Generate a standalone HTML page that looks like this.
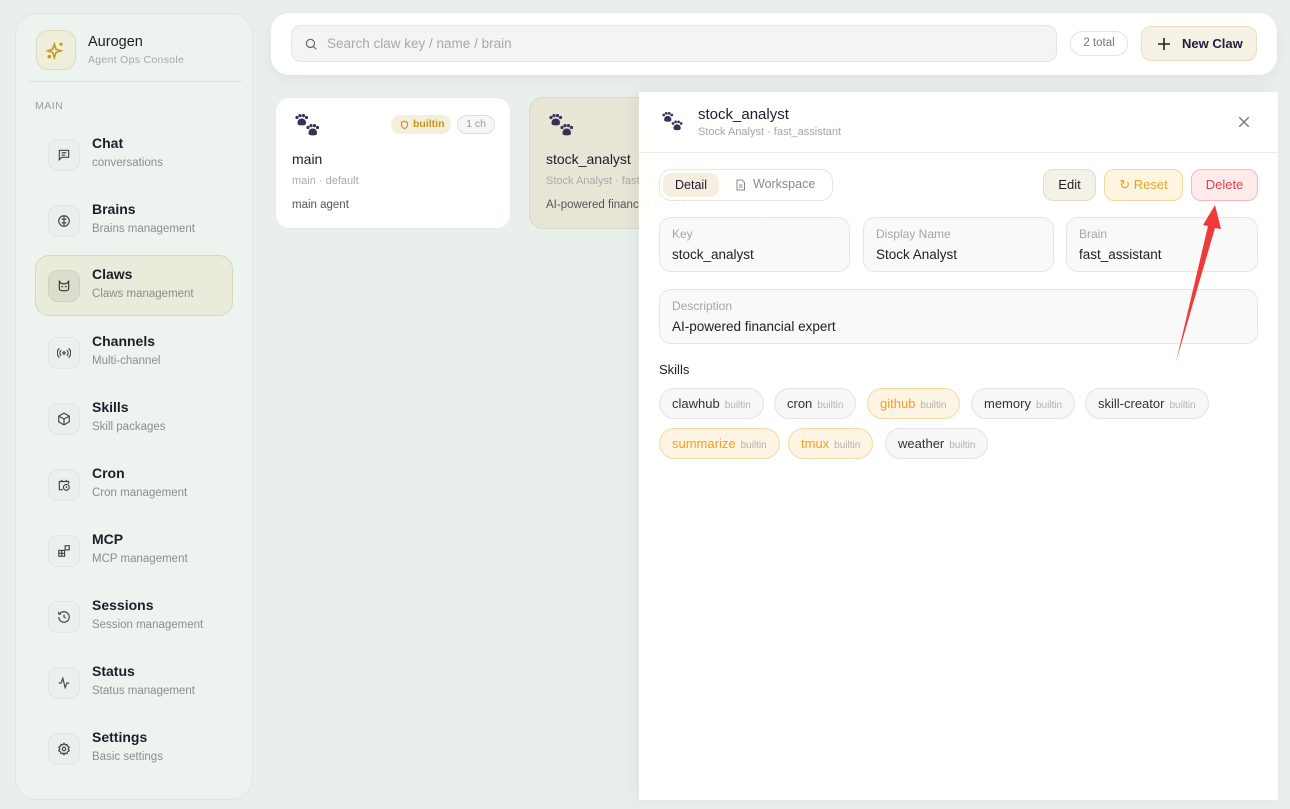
<!DOCTYPE html><html><head><style>
*{box-sizing:border-box;margin:0;padding:0}
body{width:1290px;height:809px;background:#e9f0eb;font-family:"Liberation Sans",sans-serif;position:relative;overflow:hidden;color:#1f1d2b}
.abs{position:absolute}
.side{left:15px;top:13px;width:238px;height:787px;background:#edf4ef;border:1px solid #dde6df;border-radius:22px}
.logo{left:20px;top:16px;width:40px;height:40px;border-radius:12px;background:#efeedb;border:1px solid #ddd9bf;display:flex;align-items:center;justify-content:center}
.nav{left:20px;width:198px;height:60px;border-radius:14px}
.nav.act{background:#e9ebdb;border:1px solid #d6d8bf}
.ic{position:absolute;left:12px;top:14px;width:32px;height:32px;border-radius:10px;background:#eaf1ec;border:1px solid #dfe7e1;display:flex;align-items:center;justify-content:center}
.act .ic{background:#dcddcc;border-color:#cfd1bc}
.nt{position:absolute;left:56px;top:10px;font-size:14px;font-weight:bold;color:#1f1d2b}
.ns{position:absolute;left:56px;top:32px;font-size:11.5px;color:#8b8d92}
.top{left:271px;top:13px;width:1006px;height:62px;background:#fff;border-radius:18px;box-shadow:0 4px 14px rgba(0,0,0,.05)}
.card{top:97px;width:236px;height:132px;border-radius:14px;background:#fff;border:1px solid #e6ebe7}
.drawer{left:639px;top:92px;width:639px;height:708px;background:rgba(255,255,255,.97);box-shadow:-4px 0 16px rgba(0,0,0,.05)}
.fld{position:absolute;height:55px;border:1px solid #e4e6e6;border-radius:12px;background:#f8f9f8}
.fld .l{position:absolute;left:12px;top:9px;font-size:12px;color:#a3a5aa}
.fld .v{position:absolute;left:12px;top:29px;font-size:13.5px;color:#222}
.chip{position:absolute;height:31px;border:1px solid #e2e4e4;border-radius:16px;background:#f6f7f6;font-size:13px;color:#333;padding:0 12px;line-height:29px;white-space:nowrap}
.chip small{font-size:10px;color:#b0b2b5;margin-left:5px}
.chip.o{background:#fdf4e3;border-color:#f5d9a3;color:#f0a21c}
.btn{position:absolute;top:169px;height:32px;border-radius:10px;font-size:13px;line-height:30px;text-align:center}
</style></head><body>
<svg width="0" height="0" style="position:absolute"><defs><g id="paw" fill="#3d2f55"><circle cx="2" cy="3.5" r="1.6"/><circle cx="5" cy="1.6" r="1.6"/><circle cx="8.5" cy="1.6" r="1.6"/><circle cx="11.5" cy="3.5" r="1.6"/><path d="M2.5 9c0-3 2-4.5 4.3-4.5S11 6 11 9c0 2-1.5 2.4-4.2 2.4S2.5 11 2.5 9z"/></g><g id="paws"><use href="#paw" x="0" y="0"/><use href="#paw" x="11" y="10"/></g></defs></svg>
<div class="abs side">
 <div class="abs logo"><svg width="20" height="20" viewBox="0 0 24 24" fill="none" stroke="#c69a1c" stroke-width="2"><path d="M10 5l2 6 6 2-6 2-2 6-2-6-6-2 6-2z"/><path d="M18 3v4M16 5h4"/><circle cx="4" cy="20" r="1.2"/></svg></div>
 <div class="abs" style="left:72px;top:20px;font-size:14.5px;font-weight:500">Aurogen</div>
 <div class="abs" style="left:72px;top:40px;font-size:10.5px;color:#a5a8ac;letter-spacing:.3px">Agent Ops Console</div>
 <div class="abs" style="left:12px;top:67px;width:214px;height:1px;background:#dde4df"></div>
 <div class="abs" style="left:19px;top:86px;font-size:10.5px;color:#9a9da2;letter-spacing:.5px">MAIN</div>
 <div class="abs nav" style="top:111px"><div class="ic"><svg width="14" height="14" viewBox="0 0 24 24" fill="none" stroke="#444" stroke-width="2"><path d="M4 4h16v12H8l-4 4z"/><path d="M8 8h8M8 12h6"/></svg></div><div class="nt">Chat</div><div class="ns">conversations</div></div>
 <div class="abs nav" style="top:177px"><div class="ic"><svg width="14" height="14" viewBox="0 0 24 24" fill="none" stroke="#444" stroke-width="2"><circle cx="12" cy="12" r="9"/><path d="M12 3v18M8 9h8M8 15h8"/></svg></div><div class="nt">Brains</div><div class="ns">Brains management</div></div>
 <div class="abs nav act" style="top:241px;left:19px;height:61px"><div class="ic" style="left:12px"><svg width="14" height="14" viewBox="0 0 24 24" fill="none" stroke="#333" stroke-width="2"><path d="M4 4l4 4h8l4-4v12a4 4 0 01-4 4H8a4 4 0 01-4-4z"/><circle cx="9" cy="13" r=".5"/><circle cx="15" cy="13" r=".5"/></svg></div><div class="nt">Claws</div><div class="ns">Claws management</div></div>
 <div class="abs nav" style="top:309px"><div class="ic"><svg width="14" height="14" viewBox="0 0 24 24" fill="none" stroke="#444" stroke-width="2"><circle cx="12" cy="12" r="2"/><path d="M7 7a7 7 0 000 10M17 7a7 7 0 010 10M4 4a11 11 0 000 16M20 4a11 11 0 010 16"/></svg></div><div class="nt">Channels</div><div class="ns">Multi-channel</div></div>
 <div class="abs nav" style="top:375px"><div class="ic"><svg width="14" height="14" viewBox="0 0 24 24" fill="none" stroke="#444" stroke-width="2"><path d="M12 2l9 5v10l-9 5-9-5V7z"/><path d="M3 7l9 5 9-5M12 12v10"/></svg></div><div class="nt">Skills</div><div class="ns">Skill packages</div></div>
 <div class="abs nav" style="top:441px"><div class="ic"><svg width="14" height="14" viewBox="0 0 24 24" fill="none" stroke="#444" stroke-width="2"><path d="M10 20H4V6h16v4M8 3v4M16 3v4"/><circle cx="16" cy="16" r="5"/><path d="M16 14v2l1 1"/></svg></div><div class="nt">Cron</div><div class="ns">Cron management</div></div>
 <div class="abs nav" style="top:507px"><div class="ic"><svg width="14" height="14" viewBox="0 0 24 24" fill="none" stroke="#444" stroke-width="2"><rect x="3" y="11" width="10" height="10"/><path d="M3 16h10M8 11v10"/><rect x="14" y="3" width="7" height="7"/></svg></div><div class="nt">MCP</div><div class="ns">MCP management</div></div>
 <div class="abs nav" style="top:573px"><div class="ic"><svg width="14" height="14" viewBox="0 0 24 24" fill="none" stroke="#444" stroke-width="2"><path d="M3 12a9 9 0 109-9 9 9 0 00-7 3M3 3v4h4M12 8v4l3 2"/></svg></div><div class="nt">Sessions</div><div class="ns">Session management</div></div>
 <div class="abs nav" style="top:639px"><div class="ic"><svg width="14" height="14" viewBox="0 0 24 24" fill="none" stroke="#444" stroke-width="2"><path d="M3 12h4l3-8 4 16 3-8h4"/></svg></div><div class="nt">Status</div><div class="ns">Status management</div></div>
 <div class="abs nav" style="top:705px"><div class="ic"><svg width="14" height="14" viewBox="0 0 24 24" fill="none" stroke="#444" stroke-width="2"><circle cx="12" cy="12" r="3"/><path d="M12 2l2 3 3-1 1 3 3 2-2 3 2 3-3 2-1 3-3-1-2 3-2-3-3 1-1-3-3-2 2-3-2-3 3-2 1-3 3 1z"/></svg></div><div class="nt">Settings</div><div class="ns">Basic settings</div></div>
</div>

<div class="abs top">
 <div class="abs" style="left:20px;top:12px;width:766px;height:37px;border-radius:10px;background:#f3f4f3;border:1px solid #e3e5e4"></div>
 <svg class="abs" style="left:33px;top:24px" width="14" height="14" viewBox="0 0 24 24" fill="none" stroke="#666" stroke-width="2"><circle cx="11" cy="11" r="7"/><path d="M16 16l5 5"/></svg>
 <div class="abs" style="left:56px;top:23px;font-size:13.5px;color:#a7a9ad">Search claw key / name / brain</div>
 <div class="abs" style="left:799px;top:18px;width:58px;height:25px;border:1px solid #e2e4e4;border-radius:13px;font-size:11.5px;color:#777;text-align:center;line-height:23px">2 total</div>
 <div class="abs" style="left:870px;top:13px;width:116px;height:35px;border-radius:10px;background:#f5f1e4;border:1px solid #e6dfc8;font-size:13px;font-weight:bold;line-height:33px;padding-left:40px;color:#1f1d3b">New Claw</div>
 <svg class="abs" style="left:887px;top:25px" width="12" height="12" viewBox="0 0 12 12" stroke="#222" stroke-width="1.6"><path d="M6 0v12M0 6h12"/></svg>
</div>

<div class="abs card" style="left:275px">
 <svg class="abs" style="left:19px;top:16px" width="26" height="24"><use href="#paws"/></svg>
 <div class="abs" style="left:115px;top:17px;width:60px;height:19px;border-radius:10px;background:#f5eedb;font-size:10.5px;font-weight:bold;color:#c4951c;line-height:19px;padding-left:22px">builtin</div>
 <svg class="abs" style="left:124px;top:22px" width="9" height="10" viewBox="0 0 24 24" fill="none" stroke="#c4951c" stroke-width="3"><path d="M12 2l8 3v7c0 5-4 8-8 10-4-2-8-5-8-10V5z"/></svg>
 <div class="abs" style="left:181px;top:17px;width:38px;height:19px;border-radius:10px;border:1px solid #ddd;background:#f6f6f6;font-size:10.5px;color:#999;text-align:center;line-height:17px">1 ch</div>
 <div class="abs" style="left:16px;top:53px;font-size:14px;color:#1f1d2b">main</div>
 <div class="abs" style="left:16px;top:77px;font-size:11px;color:#aaa">main · default</div>
 <div class="abs" style="left:16px;top:101px;font-size:11.5px;color:#555">main agent</div>
</div>
<div class="abs card" style="left:529px;background:#e6e5d6;border-color:#d8d8c6">
 <svg class="abs" style="left:19px;top:16px" width="26" height="24"><use href="#paws"/></svg>
 <div class="abs" style="left:16px;top:53px;font-size:14px">stock_analyst</div>
 <div class="abs" style="left:16px;top:77px;font-size:11px;color:#aaa">Stock Analyst · fast_assistant</div>
 <div class="abs" style="left:16px;top:101px;font-size:11.5px;color:#555">AI-powered financial expert</div>
</div>

<div class="abs drawer">
 <svg class="abs" style="left:23px;top:20px" width="24" height="22"><g transform="scale(0.85)"><use href="#paws"/></g></svg>
 <div class="abs" style="left:59px;top:14px;font-size:15px">stock_analyst</div>
 <div class="abs" style="left:59px;top:34px;font-size:11px;color:#a3a5aa">Stock Analyst · fast_assistant</div>
 <svg class="abs" style="left:600px;top:25px" width="10" height="10" viewBox="0 0 10 10" stroke="#777" stroke-width="1.4"><path d="M0 0l10 10M10 0L0 10"/></svg>
 <div class="abs" style="left:0;top:60px;width:639px;height:1px;background:#eceeed"></div>
 <div class="abs" style="left:20px;top:77px;width:174px;height:32px;border:1px solid #e4e6e6;border-radius:12px"></div>
 <div class="abs" style="left:24px;top:81px;width:56px;height:24px;border-radius:9px;background:#f6efdf;font-size:12.5px;text-align:center;line-height:24px">Detail</div>
 <svg class="abs" style="left:96px;top:87px" width="11" height="12" viewBox="0 0 20 24" fill="none" stroke="#888" stroke-width="2"><path d="M3 2h10l5 5v15H3z"/><path d="M7 12h7M7 16h7"/></svg>
 <div class="abs" style="left:114px;top:85px;font-size:12.5px;color:#888">Workspace</div>
</div>
<div class="btn" style="left:1043px;width:53px;background:#f4f1e6;border:1px solid #e2dccb;color:#222">Edit</div>
<div class="btn" style="left:1104px;width:79px;background:#fdf5e2;border:1px solid #f6d79a;color:#f0a21c">&#8635; Reset</div>
<div class="btn" style="left:1191px;width:67px;background:#fdeaea;border:1px solid #f5b9bb;color:#e2434a">Delete</div>

<div class="fld" style="left:659px;top:217px;width:191px"><div class="l">Key</div><div class="v">stock_analyst</div></div>
<div class="fld" style="left:863px;top:217px;width:191px"><div class="l">Display Name</div><div class="v">Stock Analyst</div></div>
<div class="fld" style="left:1066px;top:217px;width:192px"><div class="l">Brain</div><div class="v">fast_assistant</div></div>
<div class="fld" style="left:659px;top:289px;width:599px"><div class="l">Description</div><div class="v">AI-powered financial expert</div></div>
<div class="abs" style="left:659px;top:362px;font-size:13px">Skills</div>
<div class="chip" style="left:659px;top:388px">clawhub<small>builtin</small></div>
<div class="chip" style="left:774px;top:388px">cron<small>builtin</small></div>
<div class="chip o" style="left:867px;top:388px">github<small>builtin</small></div>
<div class="chip" style="left:971px;top:388px">memory<small>builtin</small></div>
<div class="chip" style="left:1085px;top:388px">skill-creator<small>builtin</small></div>
<div class="chip o" style="left:659px;top:428px">summarize<small>builtin</small></div>
<div class="chip o" style="left:788px;top:428px">tmux<small>builtin</small></div>
<div class="chip" style="left:885px;top:428px">weather<small>builtin</small></div>

<svg class="abs" style="left:0;top:0" width="1290" height="809"><path d="M1176 362 L1208 226 L1203 225 L1215 205 L1221 229 L1215 228 Z" fill="#f03a3a"/></svg>
</body></html>
